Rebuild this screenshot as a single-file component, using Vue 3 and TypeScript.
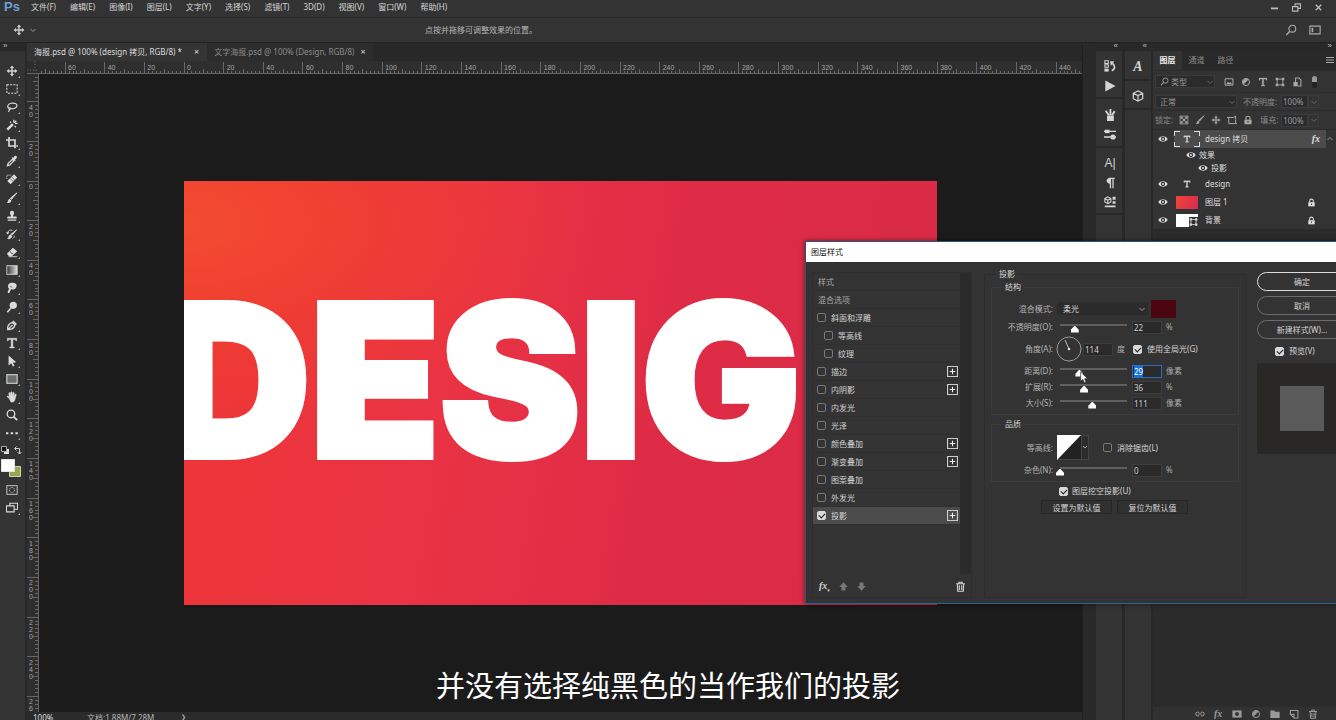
<script setup lang="ts">
import { ref } from 'vue'

interface Effect { label: string; checked: boolean; sub?: boolean; plus?: boolean }

const menus = ['文件(F)', '编辑(E)', '图像(I)', '图层(L)', '文字(Y)', '选择(S)', '滤镜(T)', '3D(D)', '视图(V)', '窗口(W)', '帮助(H)']

const icons: Record<string, string> = {
  move: '<path d="M7 1l2 2.4H7.6v3h3V5L13 7l-2.4 2V7.6h-3v3H9L7 13l-2-2.4h1.4v-3h-3V9L1 7l2.4-2v1.4h3v-3H5z" fill="currentColor" stroke="currentColor" stroke-width=".5"/>',
  marquee: '<rect x="1" y="2" width="12" height="10" fill="none" stroke="currentColor" stroke-width="1.200" stroke-dasharray="2.400 1.400"/>',
  lasso: '<path d="M3.4 8.6C1 7 1.600 3.500 6 2.600c4-.8 7 .8 6.800 3-.2 2.600-4.300 3.900-7.800 3.300M3.400 8.600c.4-1.200 2.400-.8 2 .5-.5 1.200-2.400.6-2-.5zm.6 1c-.2 1 .2 2-1.400 3" fill="none" stroke="currentColor" stroke-width="1.400"/>',
  wand: '<path d="M1.500 12.500l6.500-6.500" stroke="currentColor" stroke-width="2.800"/><path d="M9 1v3M4.500 3l1.500 1.500M10 8l1.600 1.600M10.500 5H13.500M9.500 4.500L12 2" stroke="currentColor" stroke-width="1.400"/>',
  crop: '<path d="M3.500 0v10.500H11M0 3.500h10.500V13" fill="none" stroke="currentColor" stroke-width="1.900"/><path d="M12 9.600h2v1.800h-2z" fill="currentColor"/>',
  dropper: '<path d="M1.600 12.400l.8-2.400 5-5 1.800 1.800-5 5z" fill="none" stroke="currentColor" stroke-width="1.400"/><path d="M6.500 3.500l1-1 1 .8 1.700-2c1.600-1 3.300.8 2.300 2.300l-2 1.800.8 1-1 1z" fill="currentColor"/>',
  heal: '<path d="M1.500 9.300L9.300 1.500 13 5.300 5.300 13z" fill="currentColor"/><path d="M4.600 6.200l3.500 3.500M6.500 4.500l3.500 3.500" stroke="#333" stroke-width=".8"/><path d="M1 7V2.500h5" fill="none" stroke="currentColor" stroke-dasharray="1.500 1"/>',
  brush: '<path d="M12.800 1L6.400 8.600 5 7.400z" fill="currentColor" stroke="currentColor"/><path d="M4.300 8l2 1.800c-.3 2.500-2.800 3.300-5.300 2.900 1.600-1 1-3.700 3.300-4.700z" fill="currentColor"/>',
  stamp: '<path d="M5.800 7.500C6 5.700 4.600 5 4.600 3.400a2.400 2.400 0 014.800 0C9.400 5 8 5.700 8.200 7.500h3.300c.7 0 1 .3 1 1V10h-11V8.500c0-.7.3-1 1-1zM2 11.200h10v1.300H2z" fill="currentColor"/>',
  history: '<path d="M12.500 2L7 8.600 5.600 7.400zM5 8l1.800 1.700C6.500 12 4 12.800 2 12.500 3.400 11.500 3 9 5 8z" fill="currentColor" stroke="currentColor" stroke-width=".8"/><path d="M2 6c0-3 3-4.300 5.500-3.200M10 9c-.2 1.500-.8 2.500-2 3.300" fill="none" stroke="currentColor"/><path d="M0 5h4L2 7.600z" fill="currentColor"/>',
  eraser: '<path d="M1 9L8 2 13 6 7 12H3.500z" fill="currentColor"/><path d="M4.500 6.500l4 3.300" stroke="#333"/><path d="M3 12.500h10" stroke="currentColor"/>',
  gradient: '<defs><linearGradient id="grd"><stop offset="0" stop-color="#333"/><stop offset="1" stop-color="#ddd"/></linearGradient></defs><rect x="1" y="2" width="12" height="10" fill="url(#grd)" stroke="currentColor"/>',
  smudge: '<path d="M3 2.500C5 .5 9 .5 11.500 2c1.600 1.500 1 4-.5 5.500L8.500 9 6 8.200 4 12.500c-.8 1-2.300.4-2-1L3.600 8C2 6.500 2 4 3 2.500z" fill="currentColor"/><path d="M5 4.500l2 2" stroke="#333"/>',
  dodge: '<circle cx="8.500" cy="5" r="4.200" fill="currentColor"/><path d="M6 8l-4.500 5" stroke="currentColor" stroke-width="1.800"/>',
  pen: '<path d="M2 12.500C1.500 9 3 5.500 7.500 4l3 3C9.500 10.500 6 12.500 2 12.500zL6.500 8" fill="none" stroke="currentColor" stroke-width="1.500"/><circle cx="7" cy="7.600" r="1" fill="currentColor"/><path d="M8 2.500l4 4" stroke="currentColor" stroke-width="1.900"/>',
  type: '<path d="M1.500 1.500h11v3h-1l-.5-1.600H8V11.500l1.700.4v.8H4.300v-.8l1.700-.4V2.900H3l-.5 1.600h-1z" fill="currentColor" stroke="currentColor" stroke-width=".5"/>',
  select: '<path d="M3 .5l9 8.100-4 .3 2 3.600-1.900 1-2-3.900L3 12.300z" fill="currentColor"/>',
  rect: '<rect x="1" y="2" width="12" height="10" fill="#6a6e6e" stroke="currentColor" stroke-width="1.200"/>',
  hand: '<path d="M4 9L1 6.500c.6-1 1.700-.5 2.800.5L3.200 2.500c.3-1 1.300-1 1.600 0l.7 3V1.600c.3-1 1.400-1 1.600 0l.2 3.900.8-3.500c.3-.9 1.400-.7 1.500.2l-.3 4 1.400-2.400c.6-.7 1.500-.2 1.300.6L10.800 9c-.6 3-1.800 4-4 4C5.400 13 4.500 11 4 9z" fill="currentColor" stroke="currentColor" stroke-width=".5"/>',
  zoom: '<circle cx="5.800" cy="5.800" r="4.400" fill="none" stroke="currentColor" stroke-width="1.500"/><path d="M8.800 8.800L13 13" stroke="currentColor" stroke-width="2.200"/>',
  dots: '<path d="M0 6h2.800v2.500H0zM5.500 6h2.800v2.500H5.500zM11 6h2.800v2.500H11z" fill="currentColor"/>',
  mask: '<rect x="1" y="2" width="12" height="10" fill="none" stroke="currentColor"/><circle cx="7" cy="7" r="3" fill="none" stroke="currentColor" stroke-dasharray="1.200 .8"/>',
  screens: '<path d="M4.500 4V1.500h9v7H10M.5 4.500h9v7h-9z" fill="none" stroke="currentColor" stroke-width="1.300"/>',
  eye: '<path d="M.5 7C3 1.800 11 1.800 13.500 7 11 12.200 3 12.200.5 7z" fill="currentColor"/><circle cx="7" cy="7" r="3" fill="#333"/><circle cx="7" cy="7" r="1.400" fill="currentColor"/>',
  lock: '<path d="M2 6.500h10V13H2z" fill="currentColor"/><path d="M4.200 6.500V4.300c0-3.400 5.600-3.400 5.600 0v2.200" fill="none" stroke="currentColor" stroke-width="1.600"/><path d="M6.300 8.500h1.400v2.500H6.300z" fill="#333"/>',
  trash: '<path d="M1.500 3.500h11M5 3V1.500h4V3M3 4l.5 9h7l.5-9M5.500 5.500v6M8.500 5.500v6" fill="none" stroke="currentColor" stroke-width="1.400"/>',
  search: '<circle cx="8.500" cy="5.500" r="4" fill="none" stroke="currentColor" stroke-width="1.300"/><path d="M5.600 8.400L1.500 12.800" stroke="currentColor" stroke-width="1.600"/>',
  workspace: '<path d="M1 2.500h12v9H1z" fill="none" stroke="currentColor" stroke-width="1.300"/><path d="M3 4.500h2v5H3z" fill="currentColor"/>',
  image: '<path d="M1.500 2.500h11v9h-11z" fill="none" stroke="currentColor" stroke-width="1.400"/><path d="M3 10l2.500-3.500 2 2L9 7l2.500 3z" fill="currentColor"/>',
  adjust: '<circle cx="7" cy="7" r="5" fill="none" stroke="currentColor" stroke-width="1.400"/><path d="M10.500 3.500a5 5 0 00-7 7z" fill="currentColor"/>',
  shape: '<path d="M3 3h8v8H3z" fill="none" stroke="currentColor" stroke-width="1.300"/><path d="M1 1h3.500v3.500H1zM9.500 1H13v3.500H9.500zM1 9.500h3.500V13H1zM9.500 9.500H13V13H9.500z" fill="currentColor"/>',
  smart: '<path d="M5 7V1.500h5l2.500 2.500v8.500H8" fill="none" stroke="currentColor" stroke-width="1.500"/><path d="M2 7h6v6H2z" fill="currentColor"/>',
  checker: '<path d="M1.500 1.500h11v11h-11z" fill="none" stroke="currentColor"/><path d="M2 2h3.300v3.300H2zM8.700 2H12v3.300H8.700zM5.300 5.300h3.400v3.400H5.300zM2 8.700h3.300V12H2zM8.700 8.700H12V12H8.700z" fill="currentColor"/>',
  frame: '<path d="M0 3.500h9M2.500 3.500v8.500h9.500V6M9 3.500l3-2v4M12 12h2" fill="none" stroke="currentColor" stroke-width="1.400"/>',
  link: '<path d="M6 4.500H3.500a2.500 2.500 0 000 5H6M8 4.500h2.500a2.500 2.500 0 010 5H8M4.500 7h5" fill="none" stroke="currentColor" stroke-width="1.400"/>',
  maskadd: '<path d="M.5 2h13v10H.5z" fill="currentColor"/><circle cx="7" cy="7" r="2.700" fill="#333"/>',
  folder: '<path d="M.5 2H6l1 2h6.500v8.500H.5z" fill="currentColor"/>',
  page: '<path d="M2 7V2h10.500v10.500H8M2 7.500h5v5z" fill="none" stroke="currentColor" stroke-width="1.500"/>',
  up: '<path d="M7 1.500L12.500 7.500H9.500V12H4.500V7.500H1.500z" fill="currentColor"/>',
  down: '<path d="M7 12.500l5.500-6H9.500V2h-5v4.500h-3z" fill="currentColor"/>',
  hist2: '<path d="M1 1h4v3H1zM1 5.500h4v3H1z" fill="none" stroke="currentColor" stroke-width="1.200"/><path d="M.5 10h5v3.500h-5z" fill="currentColor"/><path d="M9 12.500c4-2 4.500-5 1-8.500" fill="none" stroke="currentColor" stroke-width="2"/><path d="M7 1.500H12L8 7z" fill="currentColor"/>',
  play: '<path d="M1.500 .5l12 6.500-12 6.500z" fill="currentColor"/>',
  brushes: '<path d="M3.500 7.500h8V14h-8z" fill="currentColor"/><path d="M5.500 7L2 2M7.500 7V0M9.500 7l3-4.500" stroke="currentColor" stroke-width="2.200"/>',
  sliders: '<path d="M0 4h14M0 10.500h14" stroke="currentColor" stroke-width="1.500"/><path d="M1 2h5.500v4H1z" fill="currentColor"/><circle cx="10.500" cy="10.500" r="3" fill="currentColor"/>',
  para: '<path d="M7.500 1v12M10.500 1v12M12.500 1.500H6.500" stroke="currentColor" stroke-width="1.500"/><path d="M7.500 1C1.500 1 1.500 8 7.500 8z" fill="currentColor"/>',
  lib: '<path d="M1 3l3.500-2L8 3v4L4.500 9 1 7zM1 3l3.500 2L8 3M4.500 5v4" fill="none" stroke="currentColor" stroke-width="1.300"/><path d="M10 1h3.500v3.500H10zM10 6h3.500v3H10zM1 11h12.500v2H1z" fill="currentColor"/>',
  cube: '<path d="M7 1l5.500 2.800v6.400L7 13 1.500 10.200V3.800zM1.500 3.800L7 6.500l5.500-2.700M7 6.500V13" fill="none" stroke="currentColor" stroke-width="1.400"/>',
}

const toolGroups = [
  ['move', 'marquee', 'lasso', 'wand', 'crop', 'dropper', 'heal'],
  ['brush', 'stamp', 'history', 'eraser', 'gradient', 'smudge'],
  ['dodge', 'pen', 'type', 'select', 'rect', 'hand', 'zoom', 'dots'],
]

const unit = 3.964
const hTicks = Array.from({ length: 264 }, (_, i) => i - 36)
  .map(n => ({ n, x: 157 + n * unit }))
  .filter(t => t.x > 12)
const vTicks = Array.from({ length: 164 }, (_, i) => i - 26)
  .map(n => ({ n, y: 107 + n * unit }))
  .filter(t => t.y > 1)
const mark = (n: number) => Math.abs(n * 2)

const effects = ref<Effect[]>([
  { label: '斜面和浮雕', checked: false },
  { label: '等高线', checked: false, sub: true },
  { label: '纹理', checked: false, sub: true },
  { label: '描边', checked: false, plus: true },
  { label: '内阴影', checked: false, plus: true },
  { label: '内发光', checked: false },
  { label: '光泽', checked: false },
  { label: '颜色叠加', checked: false, plus: true },
  { label: '渐变叠加', checked: false, plus: true },
  { label: '图案叠加', checked: false },
  { label: '外发光', checked: false },
  { label: '投影', checked: true, plus: true },
])

const opacity = ref(22)
const angle = ref(114)
const noise = ref(0)
const globalLight = ref(true)
const antialias = ref(false)
const knockout = ref(true)
const preview = ref(true)
const spreads = ref([
  { id: 'distance', label: '距离(D):', value: 29, max: 100, unit: '像素' },
  { id: 'spread', label: '扩展(R):', value: 36, max: 100, unit: '%' },
  { id: 'size', label: '大小(S):', value: 111, max: 230, unit: '像素' },
])
</script>

<template>
  <div class="app">
    <header class="menubar">
      <span class="logo">Ps</span>
      <nav class="menus">
        <button v-for="m in menus" :key="m">{{ m }}</button>
      </nav>
      <div class="winbtns">
        <button aria-label="最小化"><svg viewBox="0 0 10 10"><path d="M1 6h8" stroke="currentColor" stroke-width="2" /></svg></button>
        <button aria-label="还原"><svg viewBox="0 0 10 10"><path d="M3.500 3V1h6v5H7M.5 4h6v5h-6z" fill="none" stroke="currentColor" stroke-width="1.300" /></svg></button>
        <button aria-label="关闭"><svg viewBox="0 0 10 10"><path d="M2 2l6 6M8 2L2 8" stroke="currentColor" stroke-width="1.500" /></svg></button>
      </div>
    </header>

    <div class="options">
      <svg class="ic" viewBox="0 0 14 14" v-html="icons.move" />
      <svg class="chev" viewBox="0 0 8 8"><path d="M1.500 3L4 5.500 6.500 3" /></svg>
      <p class="hint">点按并拖移可调整效果的位置。</p>
      <button class="optbtn" aria-label="搜索"><svg class="ic" viewBox="0 0 14 14" v-html="icons.search" /></button>
      <button class="optbtn" aria-label="工作区"><svg class="ic" viewBox="0 0 14 14" v-html="icons.workspace" /></button>
    </div>

    <div class="work">
      <aside class="tools">
        <div class="grip">»</div>
        <div v-for="(g, i) in toolGroups" :key="i" class="tgroup">
          <button v-for="t in g" :key="t" :aria-label="t" :class="{ corner: t !== 'zoom' }">
            <svg class="ic" viewBox="0 0 14 14" v-html="icons[t]" />
          </button>
        </div>
        <svg class="swatches" viewBox="0 0 26 38">
          <path d="M4 6h5v5H4z" fill="#ddd" /><path d="M1.500 3.500h5v5h-5z" fill="#111" stroke="#aaa" />
          <path d="M15 5.500h4.500V11M16.500 3.500l-2 2 2 2M17.500 9l2 2 2-2" fill="none" stroke="#ccc" />
          <path d="M9.500 23.500h11v10h-11z" fill="#98a44f" stroke="#d0d4b0" />
          <path d="M1.500 16.500h13v12h-13z" fill="#fff" stroke="#e8e8e8" />
        </svg>
        <button aria-label="快速蒙版"><svg class="ic" viewBox="0 0 14 14" v-html="icons.mask" /></button>
        <button class="corner" aria-label="屏幕模式"><svg class="ic" viewBox="0 0 14 14" v-html="icons.screens" /></button>
      </aside>

      <main class="doc">
        <div class="tabs">
          <button class="tab on">海报.psd @ 100% (design 拷贝, RGB/8) * <b>×</b></button>
          <button class="tab">文字海报.psd @ 100% (Design, RGB/8) <b>×</b></button>
        </div>
        <svg class="hruler">
          <g v-for="t in hTicks" :key="t.n">
            <line :x1="t.x" :x2="t.x" :y1="t.n % 10 === 0 ? 1 : t.n % 5 === 0 ? 8 : 10" y2="13" />
            <text v-if="t.n % 10 === 0" :x="t.x + 3" y="9">{{ mark(t.n) }}</text>
          </g>
          <path class="origin" d="M8 0v14M0 9h12" />
        </svg>
        <div class="view">
          <svg class="vruler">
            <g v-for="t in vTicks" :key="t.n">
              <line :y1="t.y" :y2="t.y" :x1="t.n % 10 === 0 ? 0 : t.n % 5 === 0 ? 6 : 8" x2="11" />
              <template v-if="t.n % 10 === 0">
                <text v-for="(c, k) in String(mark(t.n))" :key="k" x="2" :y="t.y + 8 + k * 7">{{ c }}</text>
              </template>
            </g>
          </svg>
          <div class="canvas">
            <div class="artboard"><span class="word">DESIGN</span></div>
          </div>
        </div>
        <footer class="status"><span class="pct">100%</span><span class="size">文档:1.88M/7.28M</span><span class="more">❯</span></footer>
      </main>

      <div class="scroll" />

      <aside class="dock">
        <div class="grip end">«</div>
        <div class="dgroup a"><svg class="ic" viewBox="0 0 14 14" v-html="icons.hist2" /><svg class="ic" viewBox="0 0 14 14" v-html="icons.play" /></div>
        <div class="dgroup b"><svg class="ic" viewBox="0 0 14 14" v-html="icons.brushes" /><svg class="ic" viewBox="0 0 14 14" v-html="icons.sliders" /></div>
        <div class="dgroup c"><span class="glyph">A|</span><svg class="ic" viewBox="0 0 14 14" v-html="icons.para" /><svg class="ic" viewBox="0 0 14 14" v-html="icons.lib" /></div>
      </aside>
      <aside class="dock">
        <div class="grip end">«</div>
        <div class="dgroup d"><span class="glyph serif">A</span></div>
        <div class="dgroup d"><svg class="ic" viewBox="0 0 14 14" v-html="icons.cube" /></div>
      </aside>

      <aside class="panel">
        <div class="grip end">»</div>
        <div class="ptabs">
          <button class="on">图层</button><button>通道</button><button>路径</button>
          <svg class="burger" viewBox="0 0 8 8"><path d="M0 1.500h8M0 4h8M0 6.500h8" stroke="#aaa" /></svg>
        </div>
        <div class="prow filter">
          <div class="field w60"><svg class="ic" viewBox="0 0 14 14" v-html="icons.search" />
            <select aria-label="类型"><option>类型</option></select><svg class="chev" viewBox="0 0 8 8"><path d="M1.500 3L4 5.500 6.500 3" /></svg></div>
          <svg v-for="n in ['image', 'adjust', 'type', 'shape', 'smart']" :key="n" class="ic" viewBox="0 0 14 14" v-html="icons[n]" />
          <i class="toggle" />
        </div>
        <div class="prow blendrow">
          <div class="field w82"><select aria-label="混合模式"><option>正常</option></select><svg class="chev" viewBox="0 0 8 8"><path d="M1.500 3L4 5.500 6.500 3" /></svg></div>
          <label for="lop" class="dim">不透明度:</label>
          <input id="lop" class="num" value="100%"><span class="drop"><svg class="chev" viewBox="0 0 8 8"><path d="M1.500 3L4 5.500 6.500 3" /></svg></span>
        </div>
        <div class="prow locks">
          <span class="dim">锁定:</span>
          <svg v-for="n in ['checker', 'brush', 'move', 'frame', 'lock']" :key="n" class="ic" viewBox="0 0 14 14" v-html="icons[n]" />
          <label for="lfill" class="dim">填充:</label>
          <input id="lfill" class="num" value="100%"><span class="drop"><svg class="chev" viewBox="0 0 8 8"><path d="M1.500 3L4 5.500 6.500 3" /></svg></span>
        </div>
        <ul class="layers">
          <li class="on"><svg class="eye" viewBox="0 0 14 14" v-html="icons.eye" /><span class="body"><span class="thumb sel"><svg class="t" viewBox="0 0 14 14" v-html="icons.type" /></span>design 拷贝<em>fx</em><svg class="chev up" viewBox="0 0 8 8"><path d="M1.500 5L4 2.500 6.500 5" /></svg></span></li>
          <li class="fx"><svg class="eye" viewBox="0 0 14 14" v-html="icons.eye" />效果</li>
          <li class="fx deep"><svg class="eye" viewBox="0 0 14 14" v-html="icons.eye" />投影</li>
          <li><svg class="eye" viewBox="0 0 14 14" v-html="icons.eye" /><span class="body"><span class="thumb"><svg class="t" viewBox="0 0 14 14" v-html="icons.type" /></span>design</span></li>
          <li><svg class="eye" viewBox="0 0 14 14" v-html="icons.eye" /><span class="body"><span class="thumb"><i class="red" /></span>图层 1<svg class="lock" viewBox="0 0 14 14" v-html="icons.lock" /></span></li>
          <li><svg class="eye" viewBox="0 0 14 14" v-html="icons.eye" /><span class="body"><span class="thumb"><i class="white"><svg viewBox="0 0 14 14" v-html="icons.shape" /></i></span>背景<svg class="lock" viewBox="0 0 14 14" v-html="icons.lock" /></span></li>
        </ul>
        <div class="pfoot">
          <svg class="ic" viewBox="0 0 14 14" v-html="icons.link" /><em>fx</em>
          <svg v-for="n in ['maskadd', 'adjust', 'folder', 'page', 'trash']" :key="n" class="ic" viewBox="0 0 14 14" v-html="icons[n]" />
        </div>
      </aside>
    </div>

    <section class="dialog" role="dialog" aria-label="图层样式">
      <h2>图层样式</h2>
      <div class="dbody">
        <div class="styles">
          <div class="list">
            <div class="item plain">样式</div>
            <div class="item plain">混合选项</div>
            <div v-for="(e, i) in effects" :key="e.label" class="item" :class="{ sub: e.sub, on: e.checked }">
              <input :id="'fx' + i" v-model="e.checked" type="checkbox"><label :for="'fx' + i">{{ e.label }}</label>
              <button v-if="e.plus" class="plus" aria-label="添加"><svg viewBox="0 0 10 10"><path d="M.5.5h9v9h-9z" fill="none" stroke="#ccc" /><path d="M2.500 5h5M5 2.500v5" stroke="#eee" /></svg></button>
            </div>
          </div>
          <div class="lfoot">
            <em>fx<sub>▾</sub></em>
            <svg class="ic dimmed" viewBox="0 0 14 14" v-html="icons.up" />
            <svg class="ic dimmed" viewBox="0 0 14 14" v-html="icons.down" />
            <svg class="ic bin" viewBox="0 0 14 14" v-html="icons.trash" />
          </div>
        </div>

        <fieldset class="outer">
          <legend>投影</legend>
          <fieldset class="inner">
            <legend>结构</legend>
            <div class="frow blend">
              <label for="bm">混合模式:</label>
              <span class="sel"><select id="bm"><option>柔光</option></select><svg class="chev" viewBox="0 0 8 8"><path d="M1.500 3L4 5.500 6.500 3" /></svg></span>
              <button class="color" aria-label="阴影颜色" />
            </div>
            <div class="frow">
              <label for="op">不透明度(O):</label>
              <input v-model.number="opacity" type="range" max="100" aria-label="不透明度">
              <input id="op" v-model.number="opacity" class="val"><span class="unit">%</span>
            </div>
            <div class="frow angle">
              <label for="ang">角度(A):</label>
              <svg class="dial" viewBox="0 0 26 26"><circle cx="13" cy="13" r="12" fill="none" stroke="#999" /><path d="M13 13L9 4" stroke="#bbb" /><circle cx="13" cy="13" r="1.300" fill="#ddd" /></svg>
              <input id="ang" v-model.number="angle" class="val"><span class="unit deg">度</span>
              <input id="gl" v-model="globalLight" type="checkbox"><label for="gl" class="after">使用全局光(G)</label>
            </div>
            <div v-for="s in spreads" :key="s.id" class="frow">
              <label :for="s.id">{{ s.label }}</label>
              <input v-model.number="s.value" type="range" :max="s.max" :aria-label="s.label">
              <span v-if="s.id === 'distance'" class="val focus"><mark>{{ s.value }}</mark></span>
              <input v-else :id="s.id" v-model.number="s.value" class="val"><span class="unit">{{ s.unit }}</span>
            </div>
          </fieldset>
          <fieldset class="inner quality">
            <legend>品质</legend>
            <div class="frow contour">
              <label>等高线:</label>
              <button class="curve" aria-label="等高线"><svg viewBox="0 0 32 25"><path d="M0 0h32v25H0z" fill="#444" /><path d="M1 1h23v23H1z" fill="#222" /><path d="M0 0h24L0 25z" fill="#fff" /><path d="M25 1h6v23h-6z" fill="#2c2c2c" /><path d="M26 11l2 2 2-2" fill="none" stroke="#aaa" /></svg></button>
              <input id="aa" v-model="antialias" type="checkbox"><label for="aa" class="after">消除锯齿(L)</label>
            </div>
            <div class="frow">
              <label for="nz">杂色(N):</label>
              <input v-model.number="noise" type="range" max="100" aria-label="杂色">
              <input id="nz" v-model.number="noise" class="val"><span class="unit">%</span>
            </div>
          </fieldset>
          <div class="knock"><input id="ko" v-model="knockout" type="checkbox"><label for="ko">图层挖空投影(U)</label></div>
          <div class="defaults"><button>设置为默认值</button><button>复位为默认值</button></div>
        </fieldset>

        <div class="side">
          <button class="pill main">确定</button>
          <button class="pill">取消</button>
          <button class="pill">新建样式(W)...</button>
          <div class="pv"><input id="pv" v-model="preview" type="checkbox"><label for="pv">预览(V)</label></div>
          <div class="sample"><i /></div>
        </div>
      </div>
      <svg class="cursor" viewBox="0 0 10 14"><path d="M.7.8v10.500l2.500-2.200 1.700 4 1.900-.8-1.700-3.900h3.500z" fill="#fff" stroke="#222" stroke-width=".7" /></svg>
    </section>

    <p class="caption">并没有选择纯黑色的当作我们的投影</p>
  </div>
</template>

<style>
body { margin: 0; background: #1b1b1b; overflow: hidden; }
</style>

<style scoped>
* { box-sizing: border-box; }
.app { position: relative; height: 100vh; overflow: hidden; display: flex; flex-direction: column; background: #333; color: #d4d4d4; font: 8px/12px "Noto Sans", "Noto Sans CJK SC", sans-serif; white-space: nowrap; }
button, input, select { font: inherit; color: inherit; background: none; border: 0; padding: 0; margin: 0; appearance: none; border-radius: 0; outline: 0; }
svg { display: block; flex: none; }
.ic { width: 12px; height: 12px; }
.chev { width: 8px; height: 8px; fill: none; stroke: #999; }
em { font: italic 700 10px/12px "Liberation Serif", serif; }
p, h2, ul, fieldset { margin: 0; padding: 0; }

.menubar { height: 18px; display: flex; align-items: center; padding: 0 4px 3px; border-bottom: 1px solid #2a2a2a; flex: none; }
.logo { width: 27px; font: 700 13px/14px "Liberation Sans", sans-serif; color: #6f9fd8; }
.menus { display: flex; gap: 14px; flex: 1; }
.winbtns { display: flex; gap: 12px; padding-right: 8px; color: #bbb; }
.winbtns button { width: 10px; }
.winbtns svg { width: 9px; height: 9px; }

.options { height: 24px; flex: none; display: flex; align-items: center; padding: 0 15px 0 13px; }
.options > .chev { margin-left: 4px; }
.hint { flex: 1; padding-left: 388px; color: #b4b4b4; }
.optbtn { margin-left: 12px; color: #aaa; }

.work { flex: 1; min-height: 0; display: flex; background: #282828; border-top: 1px solid #222; }
.grip { height: 8px; font: 8px/6px "Liberation Sans", sans-serif; color: #bbb; padding-left: 3px; background: #282828; flex: none; }
.grip.end { text-align: right; padding-right: 4px; }
.tools { width: 25px; margin-right: 2px; background: #333; display: flex; flex-direction: column; color: #dcdcdc; }
.tools .grip { margin-bottom: 11px; }
.tools button { position: relative; width: 24px; height: 18px; padding-left: 6px; flex: none; }
.tools .corner::after { content: ""; position: absolute; right: 4px; bottom: 2px; border: 1px solid; border-color: transparent #aaa #aaa transparent; }
.tgroup { display: flex; flex-direction: column; margin-bottom: 1px; }
.swatches { width: 26px; height: 38px; }

.doc { flex: 1; min-width: 0; display: flex; flex-direction: column; }
.tabs { height: 18px; flex: none; display: flex; background: #282828; }
.tab { padding: 0 7px; color: #8b8b8b; background: #2c2c2c; }
.tab.on { background: #343434; color: #dcdcdc; }
.tab b { font-size: 9px; margin-left: 4px; color: #bbb; }
.tab.on b { margin: 0 1px 0 10px; }
.hruler { width: 100%; height: 13px; flex: none; background: #2e2e2e; border-bottom: 1px solid #666; }
line { stroke: #666; shape-rendering: crispEdges; }
text { fill: #a4a4a4; font: 7px "Liberation Sans", sans-serif; }
.origin { stroke: #666; stroke-dasharray: 1 2; fill: none; }
.view { flex: 1; min-height: 0; display: flex; }
.vruler { width: 12px; height: 100%; background: #2e2e2e; border-right: 1px solid #666; }
.canvas { flex: 1; min-width: 0; background: #1b1b1b; display: flex; align-items: center; justify-content: center; overflow: hidden; }
.artboard { width: 753px; height: 424px; overflow: hidden; display: flex; align-items: center; justify-content: center; background: radial-gradient(ellipse at 0% 10%, #f24c30 0, #f0402f99 20%, #e8304000 38%), linear-gradient(100deg, #ee3636 0, #ea3344 35%, #df2c46 62%, #d72a46 100%); }
.word { font: 900 211px/212px Inter, sans-serif; -webkit-text-stroke: 6px #fff; color: #fff; margin: -25px 0 0 0; }
.status { height: 8px; flex: none; display: flex; background: #2b2b2b; line-height: 11px; overflow: hidden; color: #b4b4b4; }
.pct { width: 60px; padding-left: 6px; color: #ddd; }
.size { width: 94px; }
.more { font-size: 6px; }
.scroll { width: 14px; background: #292929; border-left: 1px solid #202020; }

.dock { width: 26px; margin-right: 3px; background: #333; display: flex; flex-direction: column; }
.dgroup { display: flex; flex-direction: column; align-items: center; gap: 8px; padding: 9px 0 5px 2px; border-bottom: 2px solid #282828; }
.dgroup.b { gap: 7px; padding: 10px 0 6px 2px; }
.dgroup.c { gap: 7px; padding: 9px 0 5px 2px; }
.dgroup.d { padding: 9px 0 6px; }
.glyph { font: 12px/13px "Liberation Sans", sans-serif; }
.glyph.serif { font: italic 700 14px/13px "Liberation Serif", serif; }

.panel { flex: 0 0 183px; background: #2b2b2b; margin-left: -1px; display: flex; flex-direction: column; }
.ptabs { height: 19px; background: #292929; display: flex; flex: none; color: #888; align-items: stretch; }
.ptabs button { width: 29px; padding-bottom: 1px; }
.ptabs .on { background: #333; color: #eee; font-weight: 700; }
.burger { width: 8px; height: 8px; margin: 5px 2px 0 auto; }
.prow { height: 19px; flex: none; display: flex; align-items: center; background: #333; padding-left: 2px; border-bottom: 1px solid #2c2c2c; color: #999; }
.prow.filter { height: 23px; gap: 7px; border-top: 1px solid #2c2c2c; }
.prow.blendrow { height: 18px; }
.prow .ic { width: 10px; height: 10px; color: #a8a8a8; }
.field { display: flex; align-items: center; height: 13px; background: #2b2b2b; border: 1px solid #3b3b3b; padding-left: 4px; color: #999; }
.field select { flex: 1; }
.field .chev { stroke: #666; }
.w60 { width: 60px; margin-right: 2px; gap: 2px; }
.w60 .ic { width: 9px; height: 9px; }
.w82 { width: 82px; }
.toggle { width: 5px; height: 12px; border-radius: 3px; background: linear-gradient(#999 50%, #222 50%); margin-left: 3px; }
.dim { color: #8a8a8a; }
.w82 + .dim { margin-left: 6px; width: 37px; }
.num { width: 27px; height: 13px; background: #2b2b2b; border: 1px solid #3b3b3b; padding-left: 1px; margin-left: 1px; }
.drop { width: 11px; height: 13px; border: 1px solid #3b3b3b; display: flex; align-items: center; justify-content: center; }
.drop .chev { stroke: #666; }
.locks { gap: 6px; }
.locks .num { margin-left: -4px; }
.locks .drop { margin-left: -6px; }
.locks label { width: 19px; margin-left: 1px; }
.layers { list-style: none; background: #333; color: #ddd; }
.layers li { height: 18px; display: flex; align-items: center; }
.eye { width: 10px; height: 10px; margin: 0 6px 0 5px; }
.body { flex: 1; display: flex; align-items: center; height: 18px; margin-right: 10px; }
.layers .on .body { background: #4b4b4b; }
.thumb { width: 26px; height: 16px; margin-right: 5px; display: flex; align-items: center; justify-content: center; }
.thumb.sel { background: linear-gradient(#ddd, #ddd) 0 0/6px 1px, linear-gradient(#ddd, #ddd) 100% 0/6px 1px, linear-gradient(#ddd, #ddd) 0 100%/6px 1px, linear-gradient(#ddd, #ddd) 100% 100%/6px 1px, linear-gradient(#ddd, #ddd) 0 0/1px 5px, linear-gradient(#ddd, #ddd) 100% 0/1px 5px, linear-gradient(#ddd, #ddd) 0 100%/1px 5px, linear-gradient(#ddd, #ddd) 100% 100%/1px 5px; background-repeat: no-repeat; }
.t { width: 8px; height: 8px; }
.red, .white { width: 22px; height: 13px; background: linear-gradient(110deg, #ee4438, #d92b52); }
.white { background: #fff; display: flex; justify-content: flex-end; align-items: flex-end; }
.white svg { width: 9px; height: 10px; background: #333; }
.layers em { margin-left: auto; }
.chev.up { margin: 0 -8px 0 4px; }
.on em { margin-right: 2px; }
.layers .fx { height: 13px; padding-left: 28px; }
.layers .deep { padding-left: 40px; margin-bottom: 1px; }
.fx .eye { margin-right: 3px; }
.lock { width: 9px; height: 9px; margin: 0 10px 0 auto; }
.pfoot { margin-top: auto; height: 13px; background: #313131; display: flex; align-items: center; gap: 9px; padding-left: 42px; color: #999; }
.pfoot .ic { width: 10px; height: 10px; }
.pfoot em { width: 9px; }

.dialog { position: absolute; top: 241px; right: -18px; width: 549px; height: 363px; background: #333; border: 1px solid #26567a; border-bottom-color: #2c5f9e; box-shadow: 0 0 5px #0008; }
h2 { height: 20px; background: #fff; color: #111; font: inherit; line-height: 19px; padding-left: 5px; }
.dbody { display: flex; align-items: flex-start; padding-top: 10px; }
.styles { width: 160px; margin-left: 6px; border: 1px solid #2e2e2e; height: 326px; background: #333; display: flex; flex-direction: column; }
.list { height: 301px; border-right: 11px solid #2b2b2b; }
.item { height: 18px; display: flex; align-items: center; padding-left: 4px; border-bottom: 1px solid #2f2f2f; }
.item.plain { color: #aaa; padding-left: 5px; }
.item.sub { padding-left: 11px; }
.item.on { background: #4b4b4b; }
input[type="checkbox"] { width: 9px; height: 9px; border: 1px solid #777; border-radius: 2px; flex: none; }
input[type="checkbox"]:checked { background: #d8d8d8; border-color: #d8d8d8; position: relative; }
input[type="checkbox"]:checked::after { content: ""; position: absolute; left: 2px; top: 0; width: 3px; height: 5px; border: solid #222; border-width: 0 1px 1px 0; transform: rotate(45deg); }
.item label { margin-left: 5px; }
.plus { margin: 0 2px 0 auto; }
.plus svg { width: 11px; height: 11px; }
.lfoot { flex: 1; display: flex; align-items: center; padding: 2px 5px 0 6px; gap: 7px; }
.lfoot em { width: 12px; }
sub { font: 5px/5px "DejaVu Sans", sans-serif; }
.lfoot .ic { width: 11px; height: 11px; }
.dimmed { color: #777; }
.lfoot .bin { margin-left: auto; }

fieldset { border: 1px solid #3b3b3b; min-width: 0; }
legend { padding: 0 3px; height: 12px; }
.outer { width: 262px; margin: -4px 0 0 12px; padding: 0 6px; height: 330px; border-color: #2d2d2d; }
.outer > legend { margin-left: 5px; }
.inner { margin-top: 1px; padding: 6px 0 4px; display: flex; flex-direction: column; gap: 2px; }
.inner > legend { margin-left: 10px; }
.quality { margin-top: 3px; padding-top: 5px; gap: 3px; }
.frow { height: 14px; display: flex; align-items: center; }
.frow > label:first-child { width: 61px; text-align: right; color: #b4b4b4; flex: none; }
.frow.blend { height: 19px; }
.frow.angle { height: 26px; }
.frow.contour { height: 25px; }
.sel { display: flex; align-items: center; }
.blend .sel { width: 91px; height: 13px; margin-left: 4px; background: #2b2b2b; padding: 0 2px 0 6px; }
.blend select { flex: 1; }
.color { width: 25px; height: 18px; margin-left: 3px; background: #4b0612; }
input[type="range"] { width: 75px; height: 12px; margin-left: 3px; background: linear-gradient(#606060, #606060) center 3px / calc(100% - 8px) 2px no-repeat; flex: none; }
input[type="range"]::-webkit-slider-thumb { appearance: none; width: 8px; height: 7px; margin-top: 4px; background: #fff; clip-path: polygon(50% 0, 100% 60%, 100% 100%, 0 100%, 0 60%); }
.val { width: 30px; height: 13px; margin-left: 1px; padding-left: 1px; background: #2a2a2a; border: 1px solid #3d3d3d; color: #ccc; flex: none; line-height: 11px; }
.focus { border-color: #2c6cc4; }
mark { background: #1473d6; color: #fff; }
.unit { margin-left: 4px; color: #aaa; }
.dial { width: 26px; height: 26px; margin-left: 3px; }
.deg { width: 16px; }
.after { margin-left: 5px; }
.curve { margin: 0 14px 0 4px; }
.curve svg { width: 32px; height: 25px; }
.knock { display: flex; align-items: center; gap: 4px; height: 12px; margin: 3px 0 0 68px; }
.defaults { display: flex; gap: 5px; margin: 3px 0 0 50px; }
.defaults button { width: 71px; height: 14px; line-height: 11px; border: 1px solid #262626; background: #303030; }

.side { width: 90px; margin-left: 11px; display: flex; flex-direction: column; align-items: stretch; }
.pill { height: 19px; line-height: 17px; border: 1px solid #6c6c6c; border-radius: 10px; margin-bottom: 5px; }
.pill.main { border-color: #ddd; }
.pv { display: flex; align-items: center; gap: 5px; height: 12px; padding-left: 18px; margin-top: 1px; }
.sample { height: 91px; margin-top: 6px; background: #2a2827; padding: 23px; }
.sample i { display: block; height: 45px; background: #5a5a5a; }
.cursor { position: absolute; left: 274px; top: 129px; width: 9px; height: 13px; }

.caption { position: absolute; left: 0; right: 0; top: 664px; text-align: center; font: 29px/40px "Noto Sans CJK SC", sans-serif; color: #fff; }
</style>
